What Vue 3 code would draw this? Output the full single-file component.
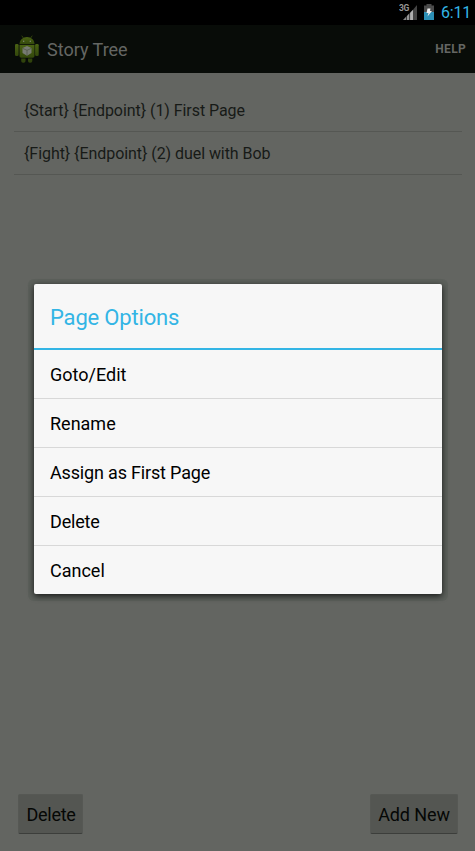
<script setup>
const pages = ['{Start} {Endpoint} (1) First Page', '{Fight} {Endpoint} (2) duel with Bob']
const options = [
  { label: 'Goto/Edit', tracking: 'normal' },
  { label: 'Rename', tracking: 'normal' },
  { label: 'Assign as First Page', tracking: 'tight' },
  { label: 'Delete', tracking: 'tight' },
  { label: 'Cancel', tracking: 'normal' },
]
</script>

<template>
  <div class="screen">
    <header class="status">
      <svg class="signal" width="19" height="18" viewBox="0 0 19 18">
        <text x="0" y="8" class="net">3G</text>
        <path d="M4 17 7.500 13.300V17Z" fill="#858585" />
        <path d="M8 12.700 10.500 10.200V17H8Z" fill="#969696" />
        <path d="M11 9.700 14 6.700V17H11Z" fill="#b0b0b0" />
        <path d="M14 6.700 18 2V17H14Z" fill="#444" />
        <path d="M7.500 13V17M10.700 10V17" stroke="#333" stroke-width="0.500" />
      </svg>
      <svg class="battery" width="10" height="16" viewBox="0 0 10 16">
        <path d="M2.500 0H7.500V1.500H10V8H0V1.500H2.500Z" fill="#4a4a4a" />
        <path d="M0 8H10V16H0Z" fill="#2d8fb5" />
        <path d="M3.500 4.500H6.500L6 7H8L3.500 12.500 4.500 9H2.500Z" fill="#eee" />
      </svg>
      <span class="clock">6:11</span>
    </header>
    <nav class="bar">
      <svg class="robot" width="24" height="28" viewBox="0 0 24 28">
        <defs>
          <linearGradient id="body" x1="0" y1="0" x2="0" y2="1">
            <stop offset="0" stop-color="#4a6213" />
            <stop offset="1" stop-color="#33480c" />
          </linearGradient>
        </defs>
        <path d="M7 1 8.700 3.500M17 1 15.300 3.500" stroke="#35480f" stroke-width="0.900" stroke-linecap="round" />
        <path d="M4.500 9.300C4.500 5 8 2 12 2S19.500 5 19.500 9.300Z" fill="url(#body)" />
        <rect x="0" y="9" width="3.600" height="12" rx="1.300" fill="url(#body)" />
        <rect x="20.100" y="9" width="3.600" height="12" rx="1.300" fill="url(#body)" />
        <path d="M4.500 10H19.500V21Q19.500 22.700 17.800 22.700H6.200Q4.500 22.700 4.500 21Z" fill="url(#body)" />
        <path d="M6.200 23.400H10.500V26Q10.500 27.700 8.700 27.700H8Q6.200 27.700 6.200 26Z M13 23.400H17.300V26Q17.300 27.700 15.500 27.700H14.800Q13 27.700 13 26Z" fill="#30430c" />
        <circle cx="8.700" cy="6.300" r="0.700" fill="#818879" />
        <circle cx="15.300" cy="6.300" r="0.700" fill="#818879" />
        <path d="M12 11 16.500 13V18L12 20.700 7.500 18V13Z" fill="#777b73" />
        <path d="M7.500 13.300 12 15.300 16.500 13.300M12 15.300V20.500" fill="none" stroke="#4a5142" stroke-width="0.700" />
      </svg>
      <h1 class="title">Story Tree</h1>
      <span class="help">HELP</span>
    </nav>
    <main class="content">
      <ul class="pages">
        <li v-for="page in pages" :key="page">{{ page }}</li>
      </ul>
      <footer class="actions">
        <button class="btn delete">Delete</button>
        <button class="btn add">Add New</button>
      </footer>
    </main>
    <section class="dialog">
      <h2>Page Options</h2>
      <ul>
        <li v-for="option in options" :key="option.label" :class="option.tracking">{{ option.label }}</li>
      </ul>
    </section>
  </div>
</template>

<style>
body { margin: 0; }
</style>

<style scoped>
.screen {
  position: relative;
  display: flex;
  flex-direction: column;
  width: 475px;
  height: 851px;
  overflow: hidden;
  background: #636561;
  font-family: Roboto, sans-serif;
}
ul { list-style: none; margin: 0; padding: 0; }
.status {
  display: flex;
  box-sizing: border-box;
  height: 25px;
  padding: 4px 4px 0 0;
  justify-content: flex-end;
  background: #000;
}
.signal { margin-right: 6px; margin-top: -1px; }
.net { font: bold 8.500px Roboto, sans-serif; fill: #969696; letter-spacing: -0.3px; }
.battery { margin-right: 7px; }
.clock {
  width: 30px;
  color: #33b5e5;
  font-size: 16px;
  line-height: 18px;
  letter-spacing: -0.2px;
  white-space: nowrap;
}
.bar {
  display: flex;
  align-items: center;
  box-sizing: border-box;
  height: 48px;
  padding: 0 9px 0 15px;
  background: #080c08;
}
.robot { margin-right: 8px; }
.title { flex: 1; margin: 0; padding-top: 2px; color: #646663; font-size: 18px; font-weight: 400; line-height: 24px; }
.help { color: #646663; font-size: 12px; font-weight: 700; letter-spacing: 0.3px; }
.content { flex: 1; display: flex; flex-direction: column; padding: 16px 13px 17px 14px; }
.pages { flex: 1; }
.pages li {
  box-sizing: border-box;
  height: 43px;
  padding-left: 10px;
  border-bottom: 1px solid #555753;
  color: #171a17;
  font-size: 16px;
  line-height: 44px;
  letter-spacing: -0.06px;
}
.actions { display: flex; justify-content: space-between; padding: 0 4px; }
.btn {
  height: 40px;
  box-sizing: border-box;
  padding: 1px 0 0;
  border: 1px solid #565854;
  border-bottom-color: #3c3e3b;
  border-radius: 2px;
  background: #545652;
  color: #050705;
  font: 18px Roboto, sans-serif;
}
.delete { width: 65px; padding-left: 1px; letter-spacing: -0.25px; }
.add { width: 88px; letter-spacing: -0.1px; }
.dialog {
  position: absolute;
  left: 34px;
  top: 284px;
  width: 408px;
  height: 310px;
  border-radius: 2px;
  background: #f7f7f7;
  box-shadow: 0 2px 6px rgba(0, 0, 0, 0.75), 0 1px 0 6px rgba(70, 85, 75, 0.25);
}
h2 {
  box-sizing: border-box;
  height: 66px;
  margin: 0;
  padding-left: 16px;
  border-bottom: 2px solid #33b5e5;
  color: #33b5e5;
  font-size: 22px;
  font-weight: 400;
  line-height: 68px;
  letter-spacing: -0.17px;
}
.dialog li {
  box-sizing: border-box;
  height: 49px;
  padding-left: 16px;
  border-bottom: 1px solid #d8d8d8;
  color: #000;
  font-size: 18px;
  line-height: 49px;
}
.dialog .tight { letter-spacing: -0.17px; }
.dialog li:last-child { height: 48px; border-bottom: 0; }
</style>
